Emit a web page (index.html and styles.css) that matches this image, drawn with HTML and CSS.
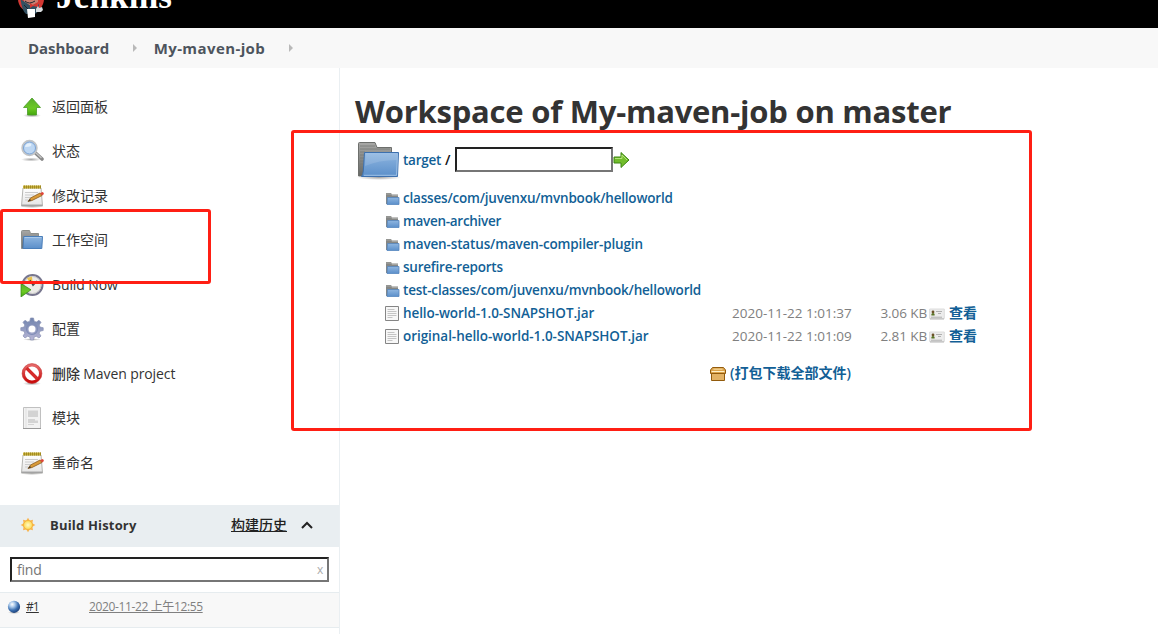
FILE: index.html
```
<!DOCTYPE html>
<html lang="zh-CN">
<head>
<meta charset="utf-8">
<title>Workspace of My-maven-job on master</title>
<link rel="stylesheet" href="styles.css">
</head>
<body>
<svg class="defs" width="0" height="0" aria-hidden="true">
  <defs>
    <linearGradient id="blue" x1="0" y1="0" x2="0" y2="1"><stop offset="0" stop-color="#8fb6e0"/><stop offset="1" stop-color="#5b8fca"/></linearGradient>
    <linearGradient id="grey" x1="0" y1="0" x2="0" y2="1"><stop offset="0" stop-color="#a8a8a6"/><stop offset="1" stop-color="#666865"/></linearGradient>
    <linearGradient id="green" x1="0" y1="0" x2="0" y2="1"><stop offset="0" stop-color="#58ad2c"/><stop offset=".6" stop-color="#6cc924"/><stop offset="1" stop-color="#43a70c"/></linearGradient>
    <linearGradient id="red" x1="0" y1="0" x2="0" y2="1"><stop offset="0" stop-color="#e56a6a"/><stop offset="1" stop-color="#c80808"/></linearGradient>
    <linearGradient id="gear" x1="0" y1="0" x2="0" y2="1"><stop offset="0" stop-color="#6f83ad"/><stop offset="1" stop-color="#b8b6d6"/></linearGradient>
    <linearGradient id="paper" x1="0" y1="0" x2="0" y2="1"><stop offset="0" stop-color="#fff"/><stop offset="1" stop-color="#e4e4e4"/></linearGradient>
    <radialGradient id="ball" cx=".35" cy=".3" r=".75"><stop offset="0" stop-color="#fff"/><stop offset=".3" stop-color="#a9c8ea"/><stop offset=".65" stop-color="#3b6fb0"/><stop offset="1" stop-color="#1c3f78"/></radialGradient>
    <radialGradient id="sun"><stop offset="0" stop-color="#fffbc8"/><stop offset="1" stop-color="#fdd84e"/></radialGradient>
    <radialGradient id="shade"><stop offset="0" stop-color="#000" stop-opacity=".35"/><stop offset="1" stop-color="#000" stop-opacity="0"/></radialGradient>
    <symbol id="folder" viewBox="0 0 24 24">
      <path d="M1.500 20.500V3.500Q1.500 2.500 2.500 2.500H9.500L10.500 5.500H18.500V20.500Z" fill="url(#grey)" stroke="#8d8f8b"/>
      <path d="M3.700 8.500H22.500L21.800 20.500H3Z" fill="url(#blue)" stroke="#4a7eb9"/>
      <path d="M4.700 9.500H21.400" stroke="#a9c9ea" fill="none"/>
    </symbol>
    <symbol id="minifolder" viewBox="0 0 16 16">
      <path d="M2 14V3H7L8 4.500H14V14Z" fill="#858684"/>
      <path d="M2 4H7L8 5.500H14" stroke="#a5a6a3" fill="none"/>
      <path d="M3.500 7.500H15V14.500H3Z" fill="url(#blue)" stroke="#5587bf" stroke-width=".8"/>
    </symbol>
    <symbol id="notepad" viewBox="0 0 24 24">
      <ellipse cx="12" cy="22.500" rx="12" ry="1.500" fill="url(#shade)"/>
      <path d="M3 4H21L22.500 22H1.500Z" fill="url(#paper)" stroke="#b5b5b2"/>
      <path d="M1.800 21.200H22.200" stroke="#999" stroke-width="1.200"/>
      <path d="M3 1.500H21V4.500H3Z" fill="#c9b23b"/><path d="M4 3H21" stroke="#a18a22" stroke-width="3" stroke-dasharray="1 1"/>
      <path d="M5 8.500H18M5 11H14M5 13.500H11M5 16H8" stroke="#cbcbcb"/>
      <path d="M8 17.500L10.500 14 20 9 22 11.500 12 16.500Z" fill="#d99b39" stroke="#8a5b20" stroke-width=".8"/>
      <path d="M20 9L23 8 24 10 22 11.500Z" fill="#df4437"/><path d="M8 17.500L10 15 11 16.500Z" fill="#333"/>
    </symbol>
    <symbol id="textfile" viewBox="0 0 16 16">
      <path d="M1.500 1.500H14.500V15.500H1.500Z" fill="#f7f7f7" stroke="#858585"/>
      <path d="M3.500 4.500H10.500M3.500 6.500H12.500M3.500 8.500H12.500M3.500 10.500H12.500M3.500 12.500H8.500" stroke="#c4c4c4"/>
    </symbol>
    <symbol id="card" viewBox="0 0 16 16">
      <path d="M.7 4H15.300V13.500H.7Z" fill="#ececec" stroke="#dcdcdc"/>
      <path d="M1 14H15" stroke="#b5b5b5"/><circle cx="4" cy="7" r="1.400" fill="#6c5229"/><path d="M2.400 10.500V9Q4 7 5.600 9V10.500Z" fill="#597426"/>
      <path d="M7 6.500H13M9 8.500H12M2 12.200H13" stroke="#b0b0b0"/>
    </symbol>
  </defs>
</svg>

<header class="topbar">
  <svg class="mascot" width="28" height="38" viewBox="0 0 28 38">
    <circle cx="14" cy="18" r="13" fill="#d33833"/>
    <path d="M6 8Q14 0 21 8L21 22 14 26 7 21Z" fill="#c97e70"/>
    <path d="M3.500 18L8 21 14 25 20 22 22 24 20 32 17 33H9Q5 30 3.500 18Z" fill="#335061"/>
    <path d="M13 22L16 24 21 21V26L16 25 13 27Z" fill="#d33833"/>
    <path d="M8 20Q12 24 18 20M7 24L11 28" fill="none" stroke="#1b2630"/>
    <path d="M10 28H18V36L11 37Z" fill="#fff"/><path d="M19 28L21 25 22 27 25 26 26 29 24 31 19 31Z" fill="#d7dbde"/>
  </svg>
  <span class="brand">Jenkins</span>
</header>

<nav class="crumbs">
  <a class="crumb">Dashboard</a><i class="sep first"></i><a class="crumb job">My-maven-job</a><i class="sep"></i>
</nav>

<div class="page">
  <aside class="side">
    <ul class="tasks">
      <li class="task"><svg class="ico" viewBox="0 0 24 24"><ellipse cx="12" cy="20.500" rx="9" ry="2" fill="url(#shade)"/><path d="M12 3L20.500 12.500H16.500V20H7.500V12.500H3.500Z" fill="url(#green)" stroke="#4a9c28" stroke-width=".8"/></svg><span>返回面板</span></li>
      <li class="task"><svg class="ico" viewBox="0 0 24 24"><ellipse cx="11" cy="20.500" rx="10" ry="2" fill="url(#shade)"/><path d="M15.500 14L22 20" stroke="#888" stroke-width="3.600" stroke-linecap="round"/><path d="M16 14L21.500 19" stroke="#c5c5c5" stroke-width="1.300"/><circle cx="9.500" cy="9" r="7.300" fill="#bdd7f3" stroke="#c2c4c6" stroke-width="1.800"/><circle cx="9.500" cy="9" r="6" fill="none" stroke="#7ba2d2"/><path d="M5 8Q6 3.500 11 4.500Q13 8 5 8" fill="#e5f1fc"/></svg><span>状态</span></li>
      <li class="task"><svg class="ico"><use href="#notepad"/></svg><span>修改记录</span></li>
      <li class="task"><svg class="ico"><use href="#folder"/></svg><span>工作空间</span></li>
      <li class="task"><svg class="ico" viewBox="0 0 24 24"><circle cx="12.500" cy="12" r="10" fill="#ecebe7" stroke="#77768e" stroke-width="2"/><circle cx="12.500" cy="12" r="8.500" fill="none" stroke="#c8c8c8"/><path d="M7 5L12 3.500 12.500 9 9 9Z" fill="#e9c24d"/><path d="M10 7L13 12.500 17 8" fill="none" stroke="#444" stroke-width="1.300"/><path d="M1 10.500V24L11 16.800Z" fill="url(#green)" stroke="#348516" stroke-width=".7"/></svg><span class="latin">Build Now</span></li>
      <li class="task"><svg class="ico" viewBox="0 0 24 24"><ellipse cx="12" cy="22.500" rx="9" ry="1.300" fill="url(#shade)"/><path d="M10.500 1H13.500L14.200 4.200 16.300 5.100 19 3.300 21 5.300 19.200 8 20 10.100 23.200 10.700V13.500L20 14.200 19.100 16.200 21 19 19 21 16.200 19.200 14.200 20 13.500 23H10.500L9.800 20 7.700 19.200 5 21 3 19 4.800 16.200 4 14.200.8 13.500V10.700L4 10.100 4.800 8 3 5.300 5 3.300 7.700 5.100 9.800 4.200Z" fill="url(#gear)" stroke="#8a92b5" stroke-width=".7"/><circle cx="12" cy="12" r="5.500" fill="none" stroke="#7f8db6" stroke-width="1.200"/><circle cx="12" cy="12" r="3.500" fill="#fff"/></svg><span>配置</span></li>
      <li class="task"><svg class="ico" viewBox="0 0 24 24"><ellipse cx="12" cy="21.500" rx="9" ry="2" fill="url(#shade)"/><circle cx="12" cy="11.500" r="8.500" fill="#fff" stroke="url(#red)" stroke-width="3"/><path d="M6.500 6L17.500 17" stroke="#d62b2b" stroke-width="3.200"/><circle cx="12" cy="11.500" r="9.900" fill="none" stroke="#c63838" stroke-width=".6"/></svg><span class="latin">删除 Maven project</span></li>
      <li class="task"><svg class="ico" viewBox="0 0 24 24"><path d="M3.500 1.500H20.500V22.500H3.500Z" fill="#f2f2f2" stroke="#c0c0c0"/><path d="M3 22.500H21" stroke="#999"/><path d="M6 2V22" stroke="#e0e0e0"/><path d="M8 4.500H18V11H8ZM8 13H15V14.500H18V17H8ZM8 18H14V19H8Z" fill="#d3d3d3"/></svg><span>模块</span></li>
      <li class="task"><svg class="ico"><use href="#notepad"/></svg><span>重命名</span></li>
    </ul>

    <section class="history">
      <div class="history-head">
        <svg class="sun" width="16" height="16" viewBox="0 0 16 16"><path d="M8 .7L9.700 3.500 13 2.800 12.400 6.200 15.300 8 12.400 9.800 13 13.200 9.700 12.500 8 15.300 6.300 12.500 3 13.200 3.600 9.800.7 8 3.600 6.200 3 2.800 6.300 3.500Z" fill="#f8b552"/><circle cx="8" cy="8" r="4.500" fill="url(#sun)" stroke="#f3ae38" stroke-width=".8"/></svg>
        <span class="history-title">Build History</span>
        <a class="trend">构建历史</a>
        <svg class="chev" width="12" height="8" viewBox="0 0 12 8"><path d="M1 7L6 2L11 7" fill="none" stroke="#222" stroke-width="2"/></svg>
      </div>
      <div class="search"><div class="field find"><span>find</span><span class="clear">x</span></div></div>
      <div class="build">
        <svg class="ball" width="14" height="14" viewBox="0 0 14 14"><ellipse cx="7" cy="12.500" rx="6" ry="1.500" fill="url(#shade)"/><circle cx="7" cy="6.800" r="6.100" fill="url(#ball)"/></svg>
        <div class="numcell"><a class="num">#1</a></div><a class="when">2020-11-22 上午12:55</a>
      </div>
    </section>
  </aside>

  <main class="main">
    <h1 class="title">Workspace of My-maven-job on master</h1>
    <div class="path">
      <svg class="bigfolder" width="48" height="42" viewBox="0 0 48 42">
        <ellipse cx="24" cy="38.500" rx="22" ry="2.500" fill="url(#shade)"/>
        <path d="M3.500 37V4.500Q3.500 3.500 4.500 3.500H20L22 8.500H36.500V37Z" fill="url(#grey)" stroke="#6d6f6c"/>
        <path d="M5 7H20M5 10H35M5 13H10M5 16H9M5 19H9M5 22H9M5 25H8M5 28H8M5 31H7" stroke="#777976" stroke-width=".8"/>
        <path d="M9.500 13.500H43.500L42.500 37.500H6.500Q8 36 8.300 32Z" fill="url(#blue)" stroke="#3d70ae"/>
        <path d="M10.500 14.600H42.400L41.600 36.300H9" fill="none" stroke="#9ec1e6"/>
        <path d="M10.500 15H42L41.600 21Q24 21 10 27Z" fill="#fff" opacity=".13"/>
      </svg>
      <a class="link target">target</a><span class="slash">/</span><div class="field pattern"></div>
      <svg width="17" height="18" viewBox="0 0 17 18"><path d="M1 6H8V1.500L16 9 8 16.500V12H1Z" fill="#72bd2c" stroke="#3d8513"/><path d="M2 7.500H9V4L14 9" fill="none" stroke="#b3e279"/></svg>
    </div>
    <div class="files">
      <div class="row"><svg class="mini"><use href="#minifolder"/></svg><a class="link f1">classes/com/juvenxu/mvnbook/helloworld</a></div>
      <div class="row"><svg class="mini"><use href="#minifolder"/></svg><a class="link f2">maven-archiver</a></div>
      <div class="row"><svg class="mini"><use href="#minifolder"/></svg><a class="link f3">maven-status/maven-compiler-plugin</a></div>
      <div class="row"><svg class="mini"><use href="#minifolder"/></svg><a class="link f4">surefire-reports</a></div>
      <div class="row"><svg class="mini"><use href="#minifolder"/></svg><a class="link f5">test-classes/com/juvenxu/mvnbook/helloworld</a></div>
      <div class="row"><svg class="mini"><use href="#textfile"/></svg><a class="link f6">hello-world-1.0-SNAPSHOT.jar</a><span class="date">2020-11-22 1:01:37</span><span class="size">3.06 KB</span><svg class="mini idcard"><use href="#card"/></svg><a class="link zh">查看</a></div>
      <div class="row"><svg class="mini"><use href="#textfile"/></svg><a class="link f7">original-hello-world-1.0-SNAPSHOT.jar</a><span class="date">2020-11-22 1:01:09</span><span class="size">2.81 KB</span><svg class="mini idcard"><use href="#card"/></svg><a class="link zh">查看</a></div>
    </div>
    <div class="download">
      <svg width="16" height="16" viewBox="0 0 16 16"><path d="M2.500 2.500H13.500L15.500 5V8.500H.5V5Z" fill="#dca44c" stroke="#925b0c"/><path d="M1.500 8.500H14.500V15.500H1.500Z" fill="#e3b264" stroke="#925b0c"/><path d="M1.500 6.500H14.500" stroke="#fff0c7"/><path d="M3.500 4.200H12.500" stroke="#f8dda5"/></svg>
      <a class="link zh">(打包下载全部文件)</a>
    </div>
  </main>
</div>
<div class="mark mark-side"></div>
<div class="mark mark-main"></div>
</body>
</html>
```

FILE: styles.css
```
* { box-sizing: border-box; }
body {
  margin: 0;
  width: 1158px;
  height: 634px;
  overflow: hidden;
  position: relative;
  display: flex;
  flex-direction: column;
  background: #fff;
  color: #333;
  font: 14px/20px "Open Sans", "Noto Sans CJK SC", sans-serif;
}
svg { display: block; flex: none; }
.defs { position: absolute; }
.topbar {
  height: 28px;
  flex: none;
  overflow: hidden;
  background: #000;
  display: flex;
  align-items: flex-end;
  padding-left: 17px;
}
.mascot { margin-bottom: 9px; }
.brand {
  margin: 0 0 15px 11px;
  color: #fff;
  font: bold 35px/32px "Liberation Serif", serif;
  letter-spacing: 0.2px;
}
.crumbs {
  height: 40px;
  flex: none;
  display: flex;
  align-items: center;
  padding-left: 28px;
  background: #f8f8f8;
}
.crumb { color: #4d545d; font-size: 15px; font-weight: 700; letter-spacing: -0.05px; }
.job { letter-spacing: 0.4px; }
.sep {
  margin-left: 24px;
  border-left: 4px solid #b9b9b9;
  border-top: 4px solid transparent;
  border-bottom: 4px solid transparent;
}
.sep.first { margin-right: 16.500px; }
.page { flex: 1; min-height: 0; display: flex; }
.side {
  width: 340px;
  flex: none;
  border-right: 1px solid #eaeff2;
}
.tasks { list-style: none; margin: 0; padding: 16.4px 0 20.100px 20px; }
.task { height: 44.500px; display: flex; align-items: center; gap: 8px; }
.ico { width: 24px; height: 24px; }
.latin { font-weight: 500; letter-spacing: -0.1px; }
.history-head {
  height: 42px;
  display: flex;
  align-items: center;
  padding: 0 26px 2px 20px;
  background: #e9eef1;
}
.history-title { margin-left: 14px; font-weight: 700; font-size: 13px; letter-spacing: 0.18px; }
.trend { margin-left: auto; font-weight: 500; text-decoration: underline; color: #222; }
.chev { margin-left: 14px; }
.search { height: 45px; padding: 10px 10px; }
.field {
  height: 25px;
  border: 2px solid #767676;
  border-top-color: #222;
  border-left-color: #222;
  background: #fff;
}
.find {
  display: flex;
  align-items: center;
  justify-content: space-between;
  padding: 1px 4px 0 5px;
  color: #757575;
  letter-spacing: -0.2px;
}
.clear { color: #aaa; font-size: 12px; }
.build {
  height: 36px;
  display: flex;
  align-items: center;
  padding: 0 0 6px 7px;
  border-top: 1px solid #e6ecef;
  border-bottom: 1px solid #e6ecef;
  background: #f8f8f8;
  font-size: 12px;
}
.numcell { width: 63px; margin-left: 5px; }
.num { color: #333; font-weight: 500; text-decoration: underline; letter-spacing: -0.9px; }
.when { color: #808080; text-decoration: underline; letter-spacing: -0.37px; }
.main { flex: 1; padding: 23px 0 0 16px; }
.title { margin: 0 0 0 -1px; height: 40px; font-size: 31px; line-height: 40px; font-weight: 700; letter-spacing: -0.23px; white-space: nowrap; }
.path { height: 50px; padding-top: 7px; margin-left: -1px; display: flex; align-items: center; }
.link { color: #125f96; font-size: 13.5px; font-weight: 600; white-space: nowrap; }
.zh { font-size: 14px; }
.target { letter-spacing: -0.25px; }
.slash { margin: 0 4px; color: #111; font-weight: 600; }
.pattern { width: 158px; }
.files { padding: 5px 0 0 28px; }
.row {
  height: 23px;
  display: grid;
  grid-template-columns: 16px 332px 129px 66px 16px auto;
  align-items: center;
}
.row > .link { padding-left: 3px; }
.f1 { letter-spacing: -0.2px; }
.f2 { letter-spacing: -0.3px; }
.f3 { letter-spacing: -0.15px; }
.f4 { letter-spacing: -0.22px; }
.f5 { letter-spacing: -0.2px; }
.f6 { letter-spacing: -0.09px; }
.f7 { letter-spacing: -0.05px; }
.mini { width: 16px; height: 16px; }
.idcard { margin-left: 2px; }
.row > .idcard + .link { padding-left: 6px; }
.date, .size { color: #808080; font-size: 13.5px; white-space: nowrap; }
.size { text-align: right; letter-spacing: -0.1px; }
.download { display: flex; align-items: center; gap: 4px; padding: 16px 0 0 354px; }
.mark { position: absolute; border: 3px solid #ff1f14; border-radius: 3px; }
.mark-side { left: 0; top: 209px; width: 211px; height: 75px; }
.mark-main { left: 291px; top: 130px; width: 741px; height: 301px; }
```
